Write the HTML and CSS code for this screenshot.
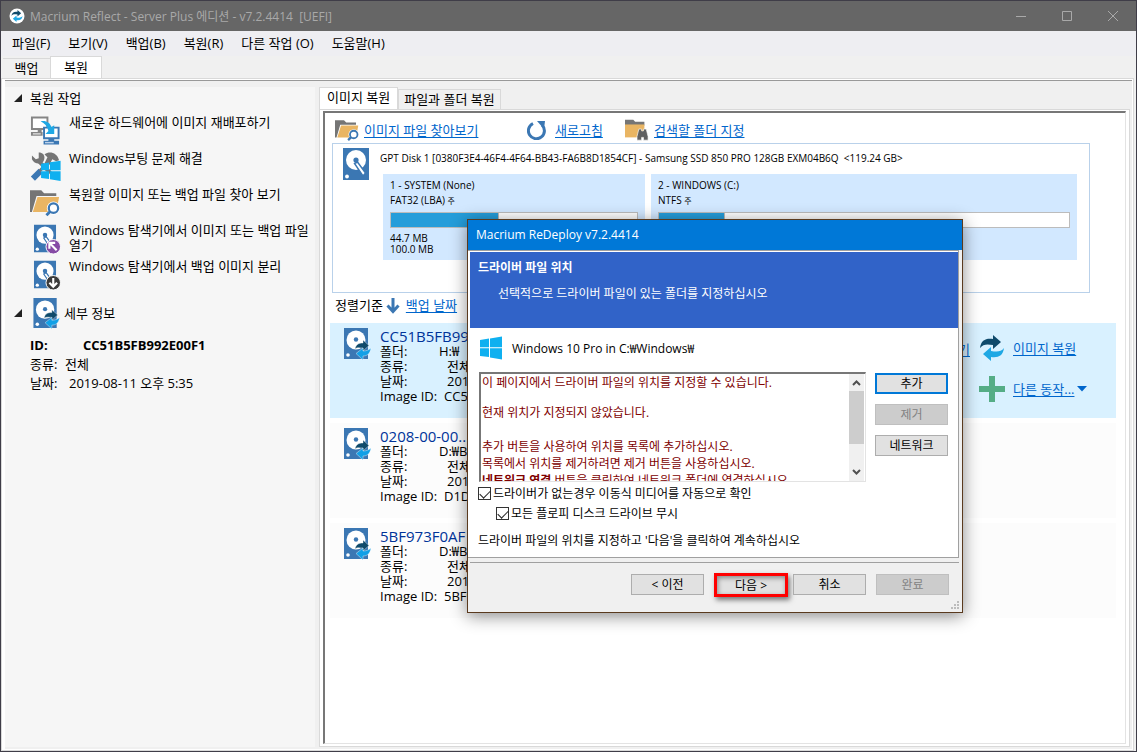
FILE: index.html
```html
<!DOCTYPE html>
<html lang="ko">
<head>
<meta charset="utf-8">
<title>Macrium Reflect</title>
<link rel="stylesheet" href="styles.css">
</head>
<body>
<svg class="defs" width="0" height="0" aria-hidden="true">
  <defs>
    <symbol id="arrows" viewBox="0 0 24 26">
      <path fill="#0f4a6b" d="M0 13C1 5 6 3 13 4V0l8 7-8 7v-4C7 9 3 9 0 13z"/>
      <path fill="#1fa8e4" d="M24 13c-1 8-6 10-13 9v4l-8-7 8-7v4c6 1 10 1 13-3z"/>
    </symbol>
    <symbol id="drive" viewBox="0 0 26 32">
      <path fill="#3b77b3" d="M0 0h26v32H0z"/>
      <circle cx="13" cy="12" r="10" fill="#fff"/>
      <circle cx="13" cy="12" r="2.6" fill="#3b77b3"/>
      <path fill="#fff" stroke="#3b77b3" stroke-width="1.4" d="M11.500 15.500l3-1.500 8 11-2.500 3z"/>
      <circle cx="4" cy="28.500" r="1.900" fill="#fff"/>
    </symbol>
    <symbol id="drive-sync" viewBox="0 0 28 32">
      <path fill="#3b77b3" d="M0 0h24v31H0z"/>
      <circle cx="12" cy="12" r="9.500" fill="#fff"/>
      <circle cx="12" cy="11.500" r="2.200" fill="#3b77b3"/>
      <circle cx="4" cy="27" r="1.800" fill="#fff"/>
      <path fill="#0f4a6b" stroke="#fff" stroke-width=".4" d="M11 21c1-5 4-6 8-6v-3l6 5.500-6 5.500v-3c-3 0-6-1-8 1z"/>
      <path fill="#12a0e6" stroke="#fff" stroke-width=".4" d="M27 20c-1 6-4 8-8 8v4l-7-6.500 7-5.500v3c3 0 6-1 8-3z"/>
    </symbol>
    <symbol id="folder-find" viewBox="0 0 32 28">
      <path fill="#757575" d="M0 24V1h12l3 3h13v3H7L2 24z"/>
      <path fill="#e9b563" d="M8 8h23l-3 16H3z"/>
      <circle cx="25" cy="20" r="7" fill="#fff"/>
      <circle cx="25" cy="20" r="5" fill="#fff" stroke="#3b77b3" stroke-width="2.400"/>
      <path stroke="#3b77b3" stroke-width="3" d="M21.500 23.500L17.500 27.500"/>
    </symbol>
    <symbol id="windows" viewBox="0 0 22 24">
      <path fill="#0fb0f0" d="M0 4l9-1.400v8.600H0zM10 2.400L22 .5v10.700H10zM0 12.300h9v8.800L0 20zM10 12.300h12v11.200l-12-2z"/>
    </symbol>
  </defs>
</svg>

<div class="window">
  <header class="titlebar">
    <svg class="app-icon" viewBox="0 0 16 16"><circle cx="8" cy="8" r="7.500" fill="#fff"/><use href="#arrows" x="2" y="2" width="12" height="12"/></svg>
    <h1 class="app-title">Macrium Reflect - Server Plus 에디션 - v7.2.4414&nbsp; [UEFI]</h1>
    <div class="window-controls">
      <button class="window-button" aria-label="최소화"><svg viewBox="0 0 12 12"><path d="M1 6.500h10"/></svg></button>
      <button class="window-button" aria-label="최대화"><svg viewBox="0 0 12 12"><path d="M1.500 1.500h9v9h-9z"/></svg></button>
      <button class="window-button" aria-label="닫기"><svg viewBox="0 0 12 12"><path d="M1 1l10 10M11 1L1 11"/></svg></button>
    </div>
  </header>

  <nav class="menubar">
    <button class="menu-item">파일(F)</button>
    <button class="menu-item">보기(V)</button>
    <button class="menu-item">백업(B)</button>
    <button class="menu-item">복원(R)</button>
    <button class="menu-item">다른 작업 (O)</button>
    <button class="menu-item">도움말(H)</button>
  </nav>

  <div class="tabs main-tabs">
    <button class="tab">백업</button>
    <button class="tab active">복원</button>
  </div>

  <div class="workspace">
    <div class="workspace-inner">
      <aside class="sidebar">
        <h2 class="group-title tasks-title"><svg class="twisty" viewBox="0 0 8 8"><path d="M8 0v8H0z"/></svg>복원 작업</h2>
        <ul class="tasks">
          <li class="task">
            <svg class="task-icon" viewBox="0 0 32 32">
              <path fill="#fff" stroke="#858585" stroke-width="2" d="M2 2h16v12H2z"/><path fill="#858585" d="M8 15h4v2H8zM1 17h12v4H1z"/>
              <path stroke="#fff" d="M3 19h8"/>
              <path fill="#fff" stroke="#3b77b3" stroke-width="2" d="M14.500 12.500h15v11h-15z"/><path fill="#3b77b3" d="M19 24h6v2h-6zM14 26h16v4H14z"/><path stroke="#bcd2ea" stroke-width="1.500" d="M15.500 28h9"/>
              <path fill="#1fa8e4" d="M11 6c6-1 10 2 11 6l3-2v9h-9l3-3c-1-5-4-8-8-10z"/>
            </svg>
            <button class="task-label">새로운 하드웨어에 이미지 재배포하기</button>
          </li>
          <li class="task">
            <svg class="task-icon" viewBox="0 0 32 32">
              <path fill="none" stroke="#757575" stroke-width="4" d="M8 9l13 13"/>
              <path fill="#757575" d="M2 4l4 4 3-1V1c6 0 7 5 5 9-3 4-10 3-12-2zM15 3c5-4 13-2 15 6l-3 1-4-2-3 6-5-2 3-6z"/>
              <path stroke="#3b77b3" stroke-width="6" d="M3 28l8-8"/><path stroke="#757575" stroke-width="3" d="M10 20l9-9"/>
              <use href="#windows" x="11" y="9" width="21" height="22"/>
            </svg>
            <button class="task-label">Windows부팅 문제 해결</button>
          </li>
          <li class="task">
            <svg class="task-icon" viewBox="0 0 32 32"><use href="#folder-find" x="0" y="1" width="31" height="29"/></svg>
            <button class="task-label">복원할 이미지 또는 백업 파일 찾아 보기</button>
          </li>
          <li class="task">
            <svg class="task-icon" viewBox="0 0 32 32"><use href="#drive" x="4" y="0" width="23" height="31"/><circle cx="24" cy="24" r="7.500" fill="#864ba5" stroke="#fff"/><path fill="none" stroke="#fff" stroke-width="2.200" d="M20 26v-6h6M20.500 20.500l7 7"/></svg>
            <button class="task-label">Windows 탐색기에서 이미지 또는 백업 파일 열기</button>
          </li>
          <li class="task">
            <svg class="task-icon" viewBox="0 0 32 32"><use href="#drive" x="4" y="0" width="23" height="31"/><circle cx="24" cy="24" r="7.500" fill="#3b3b3b" stroke="#fff"/><path fill="none" stroke="#fff" stroke-width="2.200" d="M24 19v9M20 24l4 4 4-4"/></svg>
            <button class="task-label">Windows 탐색기에서 백업 이미지 분리</button>
          </li>
        </ul>
        <h2 class="group-title details-title"><svg class="twisty" viewBox="0 0 8 8"><path d="M8 0v8H0z"/></svg><svg class="details-icon"><use href="#drive-sync"/></svg>세부 정보</h2>
        <dl class="details">
          <div class="detail strong"><dt>ID:</dt><dd>CC51B5FB992E00F1</dd></div>
          <div class="detail kind"><dt>종류:</dt><dd>전체</dd></div>
          <div class="detail date"><dt>날짜:</dt><dd>2019-08-11 오후 5:35</dd></div>
        </dl>
      </aside>

      <main class="content">
        <div class="tabs content-tabs">
          <button class="tab active">이미지 복원</button>
          <button class="tab">파일과 폴더 복원</button>
        </div>
        <div class="panel">
          <div class="panel-inner">
            <div class="toolbar">
              <div class="tool browse"><svg class="tool-icon"><use href="#folder-find"/></svg><a href="#">이미지 파일 찾아보기</a></div>
              <div class="tool refresh"><svg class="refresh-icon" viewBox="0 0 20 20"><path fill="none" stroke="#3b77b3" stroke-width="3" d="M6 3.500a8 8 0 1 0 9 1.500"/><path fill="#3b77b3" d="M10 1h8l-1 8z"/></svg><a href="#">새로고침</a></div>
              <div class="tool"><svg class="tool-icon" viewBox="0 0 26 24"><path fill="#757575" d="M0 1h9l2 2h10v4H0z"/><path fill="#e9b563" d="M0 6h21v14H0z"/><path fill="#606060" stroke="#fff" stroke-width=".7" d="M15 11h3v2h2v-2h3l2 8v4h-5v-3h-2v3h-5v-4z"/></svg><a href="#">검색할 폴더 지정</a></div>
            </div>

            <section class="disk">
              <svg class="disk-icon"><use href="#drive"/></svg>
              <div class="disk-body">
                <h3 class="disk-title">GPT Disk 1 [0380F3E4-46F4-4F64-BB43-FA6B8D1854CF] - Samsung SSD 850 PRO 128GB EXM04B6Q&nbsp; &lt;119.24 GB&gt;</h3>
                <div class="partitions">
                  <div class="partition system">
                    <p>1 - SYSTEM (None)</p><p>FAT32 (LBA) <small>주</small></p>
                    <div class="usage"><div class="used" style="width:44%"></div></div>
                    <div class="sizes"><p>44.7 MB</p><p>100.0 MB</p></div>
                  </div>
                  <div class="partition">
                    <p>2 - WINDOWS (C:)</p><p>NTFS <small>주</small></p>
                    <div class="usage"><div class="used" style="width:16%"></div></div>
                  </div>
                </div>
              </div>
            </section>

            <div class="sort"><span>정렬기준</span><svg class="sort-icon" viewBox="0 0 14 16"><path fill="none" stroke="#3b77b3" stroke-width="3" d="M7 0v13M1.500 7.500L7 13.500l5.500-6"/></svg><a href="#">백업 날짜</a></div>

            <div class="images">
              <article class="image selected">
                <svg class="image-icon"><use href="#drive-sync"/></svg>
                <div class="image-body">
                  <h3>CC51B5FB99</h3>
                  <dl>
                    <div class="folder"><dt>폴더:</dt><dd>H:₩</dd></div>
                    <div><dt>종류:</dt><dd>전체</dd></div>
                    <div><dt>날짜:</dt><dd>2019</dd></div>
                    <div class="image-id"><dt>Image ID:</dt><dd>CC51</dd></div>
                  </dl>
                </div>
                <a class="browse-link" href="#">보기</a>
                <div class="actions">
                  <div class="action"><svg class="action-icon"><use href="#arrows"/></svg><a href="#">이미지 복원</a></div>
                  <div class="action"><svg class="action-icon" viewBox="0 0 26 26"><path fill="#55ad86" d="M10 0h6v10h10v6H16v10h-6V16H0v-6h10z"/></svg><a href="#">다른 동작...</a><svg class="caret" viewBox="0 0 10 6"><path d="M0 0h10L5 5.500z"/></svg></div>
                </div>
              </article>
              <article class="image">
                <svg class="image-icon"><use href="#drive-sync"/></svg>
                <div class="image-body">
                  <h3>0208-00-00...</h3>
                  <dl>
                    <div class="folder"><dt>폴더:</dt><dd>D:₩B</dd></div>
                    <div><dt>종류:</dt><dd>전체</dd></div>
                    <div><dt>날짜:</dt><dd>2019</dd></div>
                    <div class="image-id"><dt>Image ID:</dt><dd>D1D</dd></div>
                  </dl>
                </div>
              </article>
              <article class="image">
                <svg class="image-icon"><use href="#drive-sync"/></svg>
                <div class="image-body">
                  <h3>5BF973F0AF</h3>
                  <dl>
                    <div class="folder"><dt>폴더:</dt><dd>D:₩B</dd></div>
                    <div><dt>종류:</dt><dd>전체</dd></div>
                    <div><dt>날짜:</dt><dd>2019</dd></div>
                    <div class="image-id"><dt>Image ID:</dt><dd>5BF9</dd></div>
                  </dl>
                </div>
              </article>
            </div>
          </div>
        </div>
      </main>
    </div>
  </div>

  <section class="dialog" role="dialog" aria-labelledby="dialog-title">
    <h2 class="dialog-titlebar" id="dialog-title">Macrium ReDeploy v7.2.4414</h2>
    <div class="page">
      <header class="banner">
        <h3>드라이버 파일 위치</h3>
        <p>선택적으로 드라이버 파일이 있는 폴더를 지정하십시오</p>
      </header>
      <div class="page-body">
        <div class="os"><svg class="os-icon"><use href="#windows"/></svg><span>Windows 10 Pro in C:₩Windows₩</span></div>
        <div class="locations">
          <div class="notice">
            <div class="notice-text">
              <p>이 페이지에서 드라이버 파일의 위치를 지정할 수 있습니다.</p>
              <p class="status">현재 위치가 지정되지 않았습니다.</p>
              <p>추가 버튼을 사용하여 위치를 목록에 추가하십시오.</p>
              <p>목록에서 위치를 제거하려면 제거 버튼을 사용하십시오.</p>
              <p><b>네트워크 연결</b> 버튼을 클릭하여 네트워크 폴더에 연결하십시오.</p>
            </div>
            <div class="scrollbar">
              <svg viewBox="0 0 9 6"><path d="M1 5l3.500-3.500L8 5"/></svg>
              <div class="thumb"></div>
              <svg viewBox="0 0 9 6"><path d="M1 1l3.500 3.500L8 1"/></svg>
            </div>
          </div>
          <div class="location-buttons">
            <button class="button focused">추가</button>
            <button class="button" disabled>제거</button>
            <button class="button">네트워크</button>
          </div>
        </div>
        <label class="check"><input type="checkbox" checked>드라이버가 없는경우 이동식 미디어를 자동으로 확인</label>
        <label class="check nested"><input type="checkbox" checked>모든 플로피 디스크 드라이브 무시</label>
        <p class="hint">드라이버 파일의 위치를 지정하고 '다음'을 클릭하여 계속하십시오</p>
      </div>
    </div>
    <footer class="dialog-footer">
      <button class="button">&lt; 이전</button>
      <button class="button next">다음 &gt;</button>
      <button class="button">취소</button>
      <button class="button finish" disabled>완료</button>
      <svg class="grip" viewBox="0 0 8 8"><path d="M6 0h2v2H6zM3 3h2v2H3zM6 3h2v2H6zM0 6h2v2H0zM3 6h2v2H3zM6 6h2v2H6z"/></svg>
    </footer>
  </section>
</div>
</body>
</html>
```
FILE: styles.css
```css
* { box-sizing: border-box; }
body, h1, h2, h3, p, ul, dl, dd { margin: 0; padding: 0; }
body {
  color: #000;
  font: 13px/15px "Open Sans", "Noto Sans CJK KR", sans-serif;
}
h1, h2, h3 { font-weight: 400; font-size: 13px; }
button { margin: 0; padding: 0; border: 0; background: none; color: inherit; font: inherit; text-align: left; }
a { color: #0066cc; text-decoration: underline; text-underline-offset: 2px; white-space: nowrap; }
svg { display: block; flex: none; }
.defs { position: absolute; }

.window {
  position: relative;
  display: flex;
  flex-direction: column;
  min-height: 100vh;
  overflow: hidden;
  border: 1px solid #3f3d48;
  background: #f0f0f0;
}
.titlebar { display: flex; align-items: center; height: 30px; padding-left: 8px; background: #666; color: #a9a9a9; }
.app-icon { width: 16px; height: 16px; margin-right: 5px; }
.app-title { flex: 1; font-size: 12px; }
.window-controls { display: flex; }
.window-button { display: flex; align-items: center; justify-content: center; width: 46px; height: 30px; }
.window-button svg { width: 12px; height: 12px; fill: none; stroke: #a9a9a9; }

.menubar { display: flex; gap: 18px; height: 25px; padding-left: 11px; background: #eeeef2; }

.tabs { display: flex; align-items: flex-end; }
.tab { height: 20px; padding: 0 5px; border: 1px solid #d9d9d9; border-bottom: 0; background: #f0f0f0; white-space: nowrap; text-align: center; }
.tab.active { background: #fff; }
.main-tabs { padding-left: 2px; }
.main-tabs .tab { width: 47px; height: 20px; border-left: 0; border-right: 0; }
.main-tabs .tab.active { width: 52px; height: 22px; border: 1px solid #d9d9d9; border-bottom: 0; }

.workspace { flex: 1; display: flex; margin-right: 2px; border: 1px solid #d9d9d9; background: #fff; padding: 1px 1px 1px 3px; }
.workspace-inner { flex: 1; display: flex; min-width: 0; padding: 6px 0 2px; border-top: 1px solid #999; background: #f0f0f0; }

.sidebar { width: 310px; flex: none; padding: 3px 1px 0 9px; background: #f6f6f6; }
.group-title { display: flex; align-items: center; }
.twisty { width: 8px; height: 8px; margin-right: 8px; fill: #222; }
.tasks-title { height: 16px; }
.tasks { padding: 9px 0 0 16px; list-style: none; }
.task { display: flex; gap: 8px; height: 36px; }
.task-icon { width: 31px; height: 32px; }
.task-label { align-self: flex-start; word-break: keep-all; }
.details-title { height: 30px; margin-top: 3px; }
.details-icon { width: 28px; height: 31px; margin: 0 3px 0 3px; }
.details { padding: 8px 0 0 16px; }
.detail { display: flex; height: 19px; align-items: center; }
.detail dt { width: 39px; }
.detail.strong { font-weight: 700; }
.detail.strong dt { width: 53px; }
.detail.kind dt { width: 35px; }

.content { flex: 1; display: flex; flex-direction: column; min-width: 0; margin-left: 4px; margin-right: 2px; }
.content-tabs .tab { height: 20px; padding: 0 5px; }
.content-tabs .tab.active { height: 22px; padding: 0 7px 2px; }
.panel { flex: 1; display: flex; padding: 1px 3px 2px; border: 1px solid #d9d9d9; background: #fff; }
.panel-inner {
  flex: 1;
  min-width: 0;
  padding: 3px 9px 0 5px;
  border: 1px solid #e3e3e3;
  border-top: 2px solid #777;
  border-left: 2px solid #777;
}
.toolbar { display: flex; height: 27px; padding: 1px 0 0 5px; }
.tool { display: flex; align-items: center; gap: 5px; }
.tool.browse { width: 192px; }
.tool.refresh { width: 98px; gap: 8px; }
.tool-icon { width: 24px; height: 24px; }
.refresh-icon { width: 20px; height: 20px; }

.disk { display: flex; min-height: 150px; margin: 0 26px 0 2px; padding: 4px 12px 0 10px; border: 1px solid #b9d1ea; }
.disk-icon { width: 26px; height: 32px; margin-right: 11px; }
.disk-body { flex: 1; min-width: 0; }
.disk-title, .partition { font: 10px/15px "Open Sans", "Noto Sans CJK KR", sans-serif; }
.disk-title { height: 26px; padding-top: 3px; white-space: nowrap; }
.partitions { display: flex; gap: 6px; margin-left: 3px; }
.partition { flex: 1; height: 86px; padding: 4px 7px; background: #d2e8ff; }
.partition.system { flex: 0 0 262px; }
.partition small { font-size: 8px; }
.usage { height: 16px; margin: 4px 0 5px; border: 1px solid #bcbcbc; background: #fff; }
.used { height: 100%; border-right: 1px solid #bcbcbc; background: #259dda; }
.sizes { line-height: 11px; }

.sort { display: flex; align-items: center; height: 30px; padding: 0 0 5px 5px; gap: 3px; }
.sort-icon { width: 14px; height: 16px; margin-right: 3px; }

.images { display: flex; flex-direction: column; gap: 5px; }
.image { position: relative; display: flex; height: 95px; padding: 5px 0 0 14px; background: #fcfcfc; }
.image.selected { background: #d9f1ff; }
.image-icon { width: 28px; height: 32px; margin-right: 8px; }
.image-body { flex: 1; }
.image h3 { height: 16px; color: #003399; font-size: 15px; line-height: 16px; }
.image dl div { display: flex; height: 15px; }
.image dt { width: 67px; }
.image .folder dt { width: 59px; }
.image .image-id dt { width: 64px; }
.browse-link { align-self: flex-start; padding-top: 14px; }
.actions { display: flex; flex-direction: column; gap: 15px; width: 146px; padding: 7px 0 0 9px; }
.action { display: flex; align-items: center; height: 26px; gap: 8px; }
.action-icon { width: 26px; height: 26px; }
.caret { width: 10px; height: 6px; margin-left: -5px; fill: #0066cc; }

.dialog {
  position: absolute;
  left: 466px;
  top: 218px;
  width: 496px;
  border: 1px solid #5a3a1e;
  background: #f0f0f0;
  box-shadow: 0 3px 16px rgba(0, 0, 0, .45);
  font-size: 12px;
  line-height: 17px;
}
.dialog-titlebar { height: 30px; padding: 6px 8px; background: #0078d7; color: #fff; font-size: 12px; line-height: 17px; }
.page { margin-right: 3px; padding: 1px 0 0 2px; border: 1px solid #a0a0a0; border-left: 0; background: #fff; }
.banner { height: 76px; padding: 7px 8px; background: #3163c8; color: #fff; }
.banner h3 { font-size: 12px; font-weight: 700; }
.banner p { padding: 9px 0 0 20px; }
.page-body { padding: 8px 10px 8px 8px; }
.os { display: flex; align-items: center; gap: 10px; height: 24px; padding-left: 2px; }
.os-icon { width: 22px; height: 24px; }
.locations { display: flex; gap: 9px; padding: 12px 0 1px 1px; }
.notice { flex: 1; display: flex; height: 110px; border: 1px solid #e3e3e3; border-top: 2px solid #777; border-left: 2px solid #777; overflow: hidden; }
.notice-text { flex: 1; padding-left: 1px; color: #800000; white-space: nowrap; overflow: hidden; }
.notice-text .status { margin: 13px 0 17px; }
.scrollbar { display: flex; flex-direction: column; align-items: center; width: 15px; margin-right: 1px; padding: 6px 0; background: #f0f0f0; }
.scrollbar svg { width: 9px; height: 6px; fill: none; stroke: #505050; stroke-width: 2; }
.thumb { width: 15px; height: 53px; margin: 5px 0 auto; background: #cdcdcd; }
.location-buttons { display: flex; flex-direction: column; gap: 10px; padding-top: 1px; }
.button { width: 73px; height: 21px; border: 1px solid #adadad; background: #e1e1e1; line-height: 17px; text-align: center; }
.button:disabled { border-color: #bfbfbf; background: #ccc; color: #838383; }
.button.focused { border: 2px solid #0078d7; }
.check { display: flex; align-items: center; gap: 2px; height: 20px; }
.check input {
  appearance: none;
  width: 13px;
  height: 13px;
  margin: 0;
  border: 1px solid #333;
  background: #fff;
}
.check input:checked::before {
  content: "";
  display: block;
  width: 9px;
  height: 5px;
  margin: 2px 1px;
  border-left: 1px solid #222;
  border-bottom: 1px solid #222;
  transform: rotate(-45deg);
}
.check.nested { padding-left: 18px; }
.hint { padding-top: 9px; white-space: nowrap; }
.dialog-footer { position: relative; display: flex; height: 50px; margin: 4px 3px 0 2px; padding: 11px 10px 0; border-top: 1px solid #a0a0a0; justify-content: flex-end; gap: 10px; }
.dialog-footer .next { margin-right: -5px; border: 3px solid #f00; width: 74px; height: 24px; margin-top: -1px; line-height: 15px; box-shadow: 2px 3px 5px rgba(0, 0, 0, .5), inset 1px 2px 5px rgba(0, 0, 0, .4); }
.grip { position: absolute; right: 0; bottom: 3px; width: 8px; height: 8px; fill: #bcbcbc; }
```
